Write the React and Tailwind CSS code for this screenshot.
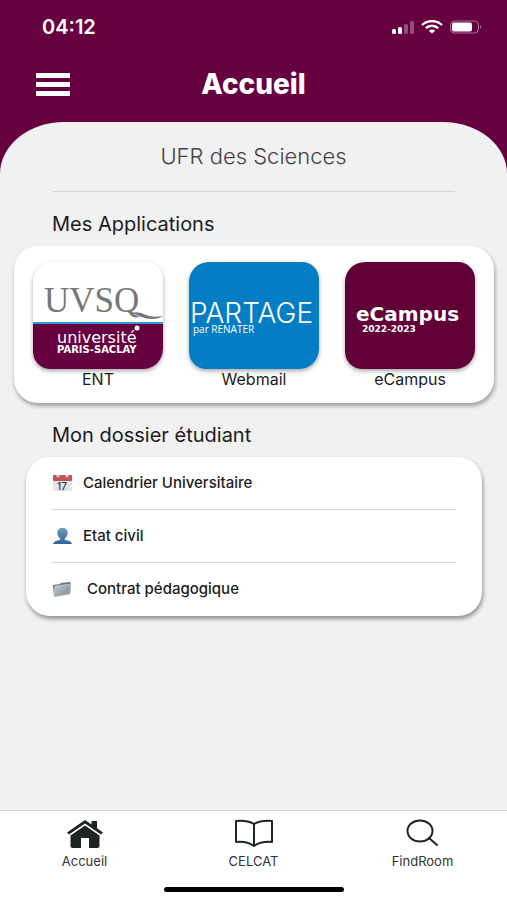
import React from "react";

const apps = [
    {name: "ENT", link: "#ent", Logo: EntLogo},
    {name: "Webmail", link: "#webmail", Logo: WebmailLogo},
    {name: "eCampus", link: "#ecampus", Logo: ECampusLogo},
];

const dossier = [
    {text: "Calendrier Universitaire", link: "#calendrier", Icon: CalendarIcon},
    {text: "Etat civil", link: "#etat-civil", Icon: PersonIcon},
    {text: "Contrat pédagogique", link: "#contrat", Icon: FolderIcon, wide: true},
];

const tabs = [
    {text: "Accueil", link: "#accueil", Icon: HouseIcon},
    {text: "CELCAT", link: "#celcat", Icon: BookIcon},
    {text: "FindRoom", link: "#findroom", Icon: SearchIcon},
];

function App() {
    return (
        <div className="min-h-screen flex flex-col bg-[#66003f] font-['Inter',sans-serif] text-[#1c1c1c]">
            <StatusBar />

            <header className="h-[68px] px-9 pb-2 grid grid-cols-[1fr_auto_1fr] items-center text-white">
                <button type="button" aria-label="Menu" className="w-[34px] flex flex-col gap-1 cursor-pointer">
                    <span className="h-[5px] w-full bg-white"></span>
                    <span className="h-[5px] w-full bg-white"></span>
                    <span className="h-[5px] w-full bg-white"></span>
                </button>
                <h1 className="text-[28px] leading-8 font-extrabold">Accueil</h1>
            </header>

            <main className="flex-1 bg-[#f1f1f1] rounded-tl-[64px_52px] rounded-tr-[64px_52px]">
                <div className="mx-[52px] h-[70px] pb-0.5 flex items-center justify-center border-b border-[#d4d4d4]">
                    <h2 className="text-[22px] leading-7 font-light text-[#444]">UFR des Sciences</h2>
                </div>

                <section>
                    <h3 className="pl-[52px] pt-[18px] pb-2 text-xl leading-7">Mes Applications</h3>
                    <div className="ml-3.5 mr-[13px] pt-4 pb-3.5 px-[19px] flex gap-[26px] bg-white rounded-3xl shadow-[1px_3px_4px_rgba(0,0,0,0.35)]">
                        {apps.map(({name, link, Logo}) => (
                            <a key={name} href={link} className="flex-1 min-w-0 text-center text-base leading-5">
                                <span className="block h-[107px] rounded-[20px_17px] overflow-hidden shadow-[0_2px_4px_rgba(0,0,0,0.35)]">
                                    <Logo />
                                </span>
                                {name}
                            </a>
                        ))}
                    </div>
                </section>

                <section>
                    <h3 className="pl-[52px] pt-[18px] pb-2 text-xl leading-7">Mon dossier étudiant</h3>
                    <ul className="ml-[26px] mr-[25px] px-[26px] bg-white rounded-3xl shadow-[1px_3px_4px_rgba(0,0,0,0.4)]">
                        {dossier.map(({text, link, Icon, wide}) => (
                            <li key={text} className="h-[53px] border-b border-[#d8d8d8] last:border-b-0">
                                <a
                                    href={link}
                                    className={`h-full flex items-center text-[15px] font-medium ${wide ? "gap-3.5" : "gap-2.5"}`}
                                >
                                    <Icon />
                                    {text}
                                </a>
                            </li>
                        ))}
                    </ul>
                </section>
            </main>

            <nav className="h-[90px] bg-white border-t border-[#d4d4d4] flex flex-col items-center justify-between pb-2">
                <div className="w-full pt-2 grid grid-cols-3">
                    {tabs.map(({text, link, Icon}) => (
                        <a
                            key={text}
                            href={link}
                            className="flex flex-col items-center gap-1 text-[13px] leading-4 text-[#333]"
                        >
                            <Icon />
                            {text}
                        </a>
                    ))}
                </div>
                <span className="h-[5px] w-[180px] rounded-full bg-black"></span>
            </nav>
        </div>
    );
}

function StatusBar() {
    return (
        <div className="h-[54px] pl-[42px] pr-6 flex items-center justify-between text-white">
            <span className="text-xl font-semibold">04:12</span>
            <div className="flex items-center gap-1.5">
                <svg width="24" height="14" viewBox="0 0 24 14" fill="#fff" aria-hidden="true">
                    <rect x="1" y="9" width="4" height="5" rx="1.5" />
                    <rect x="7" y="7" width="4" height="7" rx="1.5" />
                    <rect x="13" y="4" width="4" height="10" rx="1.5" opacity=".3" />
                    <rect x="19" y="1" width="4" height="13" rx="1.5" opacity=".3" />
                </svg>
                <svg width="22" height="14" viewBox="0 0 22 14" fill="none" stroke="#fff" aria-hidden="true">
                    <path d="M1 5C6.500 -.2 15.500 -.2 21 5" strokeWidth="2.400" />
                    <path d="M4.800 8.200C8.300 4.900 13.700 4.900 17.200 8.200" strokeWidth="2.400" />
                    <path d="M11 13.600 7.800 10.800Q11 8.400 14.200 10.800Z" fill="#fff" stroke="none" />
                </svg>
                <svg width="34" height="14" viewBox="0 0 34 14" aria-hidden="true">
                    <rect x="1.500" y="1" width="28" height="12" rx="4" fill="none" stroke="#fff" opacity=".45" />
                    <rect x="3" y="2.500" width="20" height="9" rx="2" fill="#fff" />
                    <path d="M31 5q2 2 0 4z" fill="#fff" opacity=".5" />
                </svg>
            </div>
        </div>
    );
}

function EntLogo() {
    return (
        <svg className="size-full" viewBox="0 0 130 107" preserveAspectRatio="none" role="img" aria-label="UVSQ">
            <rect width="130" height="107" fill="#fff" />
            <rect y="60" width="130" height="3" fill="#2aa0d2" />
            <rect y="62" width="130" height="45" fill="#66003f" />
            <text x="11" y="50" fontSize="35" fill="#777" fontFamily="Liberation Serif, serif">UVSQ</text>
            <path d="M98 51C104 52 109 57 119 57Q126 57 130 54Q120 56 113 53Q106 49 98 51Z" fill="#777" />
            <g fill="#fff" fontFamily="DejaVu Sans, sans-serif">
                <text x="24" y="81" fontSize="16">université</text>
                <text x="24" y="91" fontSize="10" fontWeight="700">PARIS-SACLAY</text>
            </g>
            <circle cx="104" cy="66" r="2.500" fill="#fff" />
        </svg>
    );
}

function WebmailLogo() {
    return (
        <svg className="size-full" viewBox="0 0 130 107" preserveAspectRatio="none" role="img" aria-label="Partage">
            <rect width="130" height="107" fill="#037dc3" />
            <text x="1" y="61" fontSize="28" fontWeight="300" fill="#fff">PARTAGE</text>
            <text x="4" y="71" fontSize="10" fill="#fff" fontFamily="Open Sans, sans-serif">par RENATER</text>
        </svg>
    );
}

function ECampusLogo() {
    return (
        <svg className="size-full" viewBox="0 0 130 107" preserveAspectRatio="none" role="img" aria-label="eCampus">
            <rect width="130" height="107" fill="#610037" />
            <g fill="#fff" fontWeight="700" fontFamily="DejaVu Sans, sans-serif">
                <text x="11" y="59" fontSize="20">eCampus</text>
                <text x="17" y="70" fontSize="9">2022-2023</text>
            </g>
        </svg>
    );
}

function CalendarIcon() {
    return (
        <svg width="21" height="18" viewBox="0 0 21 18" aria-hidden="true">
            <rect x="1" y="1" width="19" height="16" fill="#e3e4e6" />
            <rect x="1" y="1" width="19" height="6" fill="#c4545a" />
            <path d="M4 1l2 3 2-3zM13 1l2 3 2-3z" fill="#eed5d5" />
            <text x="5" y="16" fontSize="10" fontWeight="500" fill="#333">17</text>
        </svg>
    );
}

function PersonIcon() {
    return (
        <svg width="21" height="18" viewBox="0 0 21 18" aria-hidden="true">
            <defs>
                <linearGradient id="person" x1="0" y1="0" x2="0" y2="1">
                    <stop offset="0" stopColor="#6e9dc0" />
                    <stop offset="1" stopColor="#2f6596" />
                </linearGradient>
            </defs>
            <path
                d="M10.500 1C7 1 5 3 5.400 6.500C5.600 8.800 6.800 10.500 8.200 11.500L8 13Q2 13.500 1 17H20Q19 13.500 13 13L12.800 11.500C14.200 10.500 15.400 8.800 15.600 6.500C16 3 14 1 10.500 1Z"
                fill="url(#person)"
            />
        </svg>
    );
}

function FolderIcon() {
    return (
        <svg width="21" height="18" viewBox="0 0 21 18" aria-hidden="true">
            <defs>
                <linearGradient id="folder" x1="0" y1="0" x2="1" y2="1">
                    <stop offset="0" stopColor="#c4ccd1" />
                    <stop offset="1" stopColor="#7d868d" />
                </linearGradient>
            </defs>
            <path d="M1 4L8 3L9 2L18 1L19 3L18 13L2 16Z" fill="#66717a" />
            <path d="M3 5L19 3L18 13L2 16Z" fill="url(#folder)" stroke="#e5e9eb" strokeWidth=".5" />
        </svg>
    );
}

function HouseIcon() {
    return (
        <svg width="38" height="30" viewBox="0 0 38 30" fill="#1d2524" aria-hidden="true">
            <path d="M19 1L1 13.500L3 15.500L19 4.500L35 15.500L37 13.500L31 9.300V2H25.500V5.500Z" />
            <path d="M19 6.500L4.500 16.500V27Q4.500 29 6.500 29H15V19H23V29H31.500Q33.500 29 33.500 27V16.500Z" />
        </svg>
    );
}

function BookIcon() {
    return (
        <svg
            width="40"
            height="30"
            viewBox="0 0 40 30"
            fill="none"
            stroke="#1d2524"
            strokeWidth="2"
            strokeLinejoin="round"
            aria-hidden="true"
        >
            <path d="M20 5Q13 1 2 2V23Q13 22 20 27Q27 22 38 23V2Q27 1 20 5V26" />
        </svg>
    );
}

function SearchIcon() {
    return (
        <svg
            width="34"
            height="30"
            viewBox="0 0 34 30"
            fill="none"
            stroke="#1d2524"
            strokeWidth="2"
            strokeLinecap="round"
            aria-hidden="true"
        >
            <ellipse cx="14" cy="12" rx="12.500" ry="10.500" />
            <path d="M23 19L31 26" />
        </svg>
    );
}

export default App;
